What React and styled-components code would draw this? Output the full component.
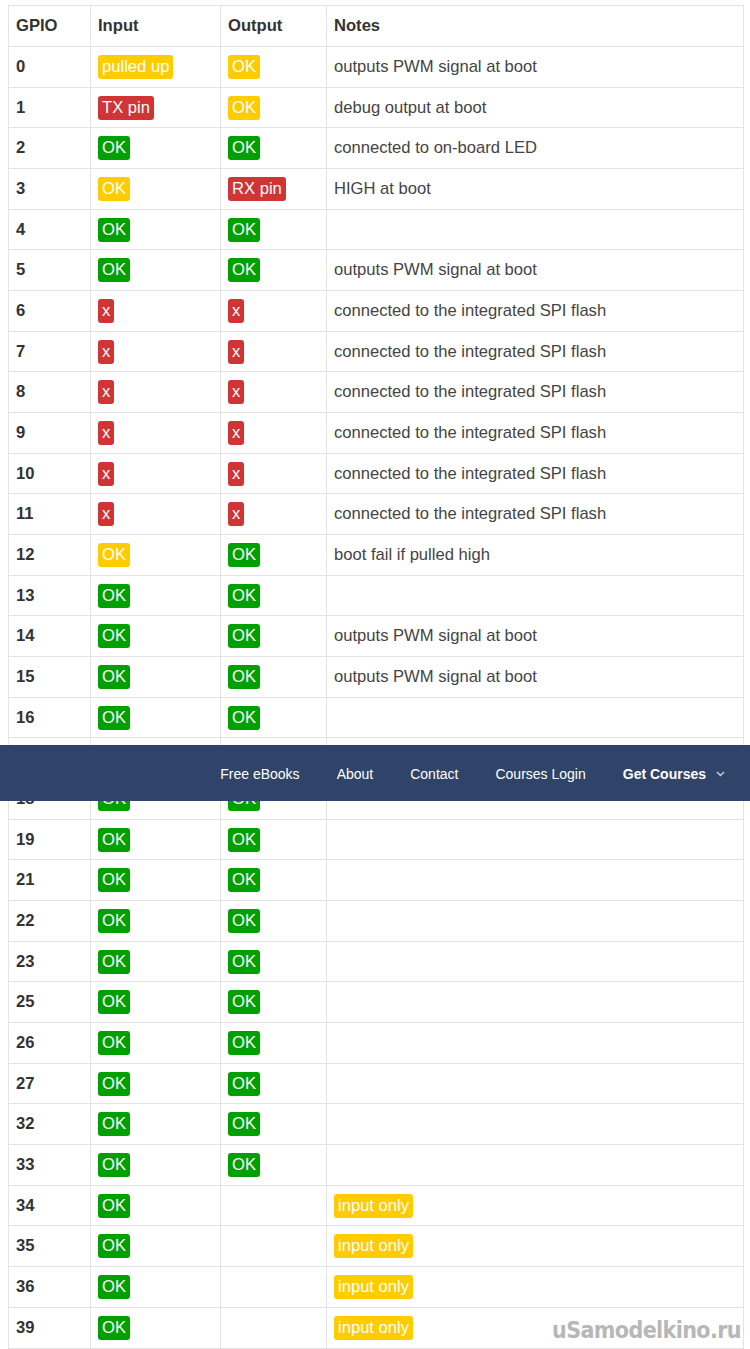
import React from "react";
import styled, { createGlobalStyle } from "styled-components";

const GlobalStyle = createGlobalStyle`
  html, body {
    margin: 0;
    padding: 0;
    background: #fff;
  }
  body {
    font-family: "Liberation Sans", Arial, sans-serif;
    color: #333;
  }
`;

const Page = styled.div`
  position: relative;
  width: 750px;
  height: 1349px;
  overflow: hidden;
  padding: 5px 7px 0 8px;
  box-sizing: border-box;
`;

const Table = styled.div`
  width: 735px;
  border-top: 1px solid #e3e3e3;
  border-right: 1px solid #e3e3e3;
  font-size: 16.6px;
`;

const Row = styled.div`
  display: grid;
  grid-template-columns: 82px 130px 106px 1fr;
  height: ${(p) => (p.head ? "41px" : "40.68px")};
  box-sizing: border-box;
  border-bottom: 1px solid #e3e3e3;
`;

const Cell = styled.div`
  display: flex;
  align-items: center;
  padding: 0 7px;
  border-left: 1px solid #e3e3e3;
  white-space: nowrap;
  color: ${(p) => (p.note ? "#444" : "#333")};
  font-weight: ${(p) => (p.bold ? "bold" : "normal")};
`;

const COLORS = {
  ok: "#00a000",
  warn: "#ffcc00",
  bad: "#d03434",
};

const Badge = styled.span`
  display: inline-block;
  background: ${(p) => COLORS[p.kind]};
  color: #fff;
  border-radius: 3px;
  padding: 0 4px;
  line-height: 24px;
  font-size: 16.6px;
  font-weight: normal;
`;

const Nav = styled.nav`
  position: absolute;
  left: 0;
  top: 745px;
  width: 750px;
  height: 56px;
  background: #2f4468;
  display: flex;
  align-items: center;
  justify-content: flex-end;
  gap: 37px;
  padding-right: 25px;
  box-sizing: border-box;
  font-family: "Liberation Sans", Arial, sans-serif;
  font-size: 14px;
  color: #fff;
`;

const NavLink = styled.span`
  font-weight: ${(p) => (p.strong ? "bold" : "normal")};
  display: flex;
  align-items: center;
  gap: 10px;
  margin-top: 1px;
`;

const Watermark = styled.div`
  position: absolute;
  right: 9px;
  bottom: 6px;
  font-family: "DejaVu Sans", sans-serif;
  font-stretch: condensed;
  font-weight: bold;
  font-size: 23px;
  letter-spacing: -0.6px;
  color: #b0b0b0;
  opacity: 0.9;
`;

const b = (kind, text) => ({ kind, text });
const OK = b("ok", "OK");
const OKY = b("warn", "OK");
const X = b("bad", "x");
const SPI = "connected to the integrated SPI flash";
const PWM = "outputs PWM signal at boot";

const rows = [
  [0, b("warn", "pulled up"), OKY, PWM],
  [1, b("bad", "TX pin"), OKY, "debug output at boot"],
  [2, OK, OK, "connected to on-board LED"],
  [3, OKY, b("bad", "RX pin"), "HIGH at boot"],
  [4, OK, OK, ""],
  [5, OK, OK, PWM],
  [6, X, X, SPI],
  [7, X, X, SPI],
  [8, X, X, SPI],
  [9, X, X, SPI],
  [10, X, X, SPI],
  [11, X, X, SPI],
  [12, OKY, OK, "boot fail if pulled high"],
  [13, OK, OK, ""],
  [14, OK, OK, PWM],
  [15, OK, OK, PWM],
  [16, OK, OK, ""],
  [17, OK, OK, ""],
  [18, OK, OK, ""],
  [19, OK, OK, ""],
  [21, OK, OK, ""],
  [22, OK, OK, ""],
  [23, OK, OK, ""],
  [25, OK, OK, ""],
  [26, OK, OK, ""],
  [27, OK, OK, ""],
  [32, OK, OK, ""],
  [33, OK, OK, ""],
  [34, OK, null, b("warn", "input only")],
  [35, OK, null, b("warn", "input only")],
  [36, OK, null, b("warn", "input only")],
  [39, OK, null, b("warn", "input only")],
];

const cell = (v) =>
  v && typeof v === "object" ? <Badge kind={v.kind}>{v.text}</Badge> : v;

function Chevron() {
  return (
    <svg width="9" height="6" viewBox="0 0 9 6" fill="none">
      <path d="M1 1l3.5 3.5L8 1" stroke="#c9d0dc" strokeWidth="1.4" />
    </svg>
  );
}

export default function App() {
  return (
    <Page>
      <GlobalStyle />
      <Table>
        <Row head>
          <Cell bold>GPIO</Cell>
          <Cell bold>Input</Cell>
          <Cell bold>Output</Cell>
          <Cell bold>Notes</Cell>
        </Row>
        {rows.map(([gpio, input, output, note]) => (
          <Row key={gpio}>
            <Cell bold>{gpio}</Cell>
            <Cell>{cell(input)}</Cell>
            <Cell>{cell(output)}</Cell>
            <Cell note>{cell(note)}</Cell>
          </Row>
        ))}
      </Table>
      <Nav>
        <NavLink>Free eBooks</NavLink>
        <NavLink>About</NavLink>
        <NavLink>Contact</NavLink>
        <NavLink>Courses Login</NavLink>
        <NavLink strong>
          Get Courses <Chevron />
        </NavLink>
      </Nav>
      <Watermark>uSamodelkino.ru</Watermark>
    </Page>
  );
}
